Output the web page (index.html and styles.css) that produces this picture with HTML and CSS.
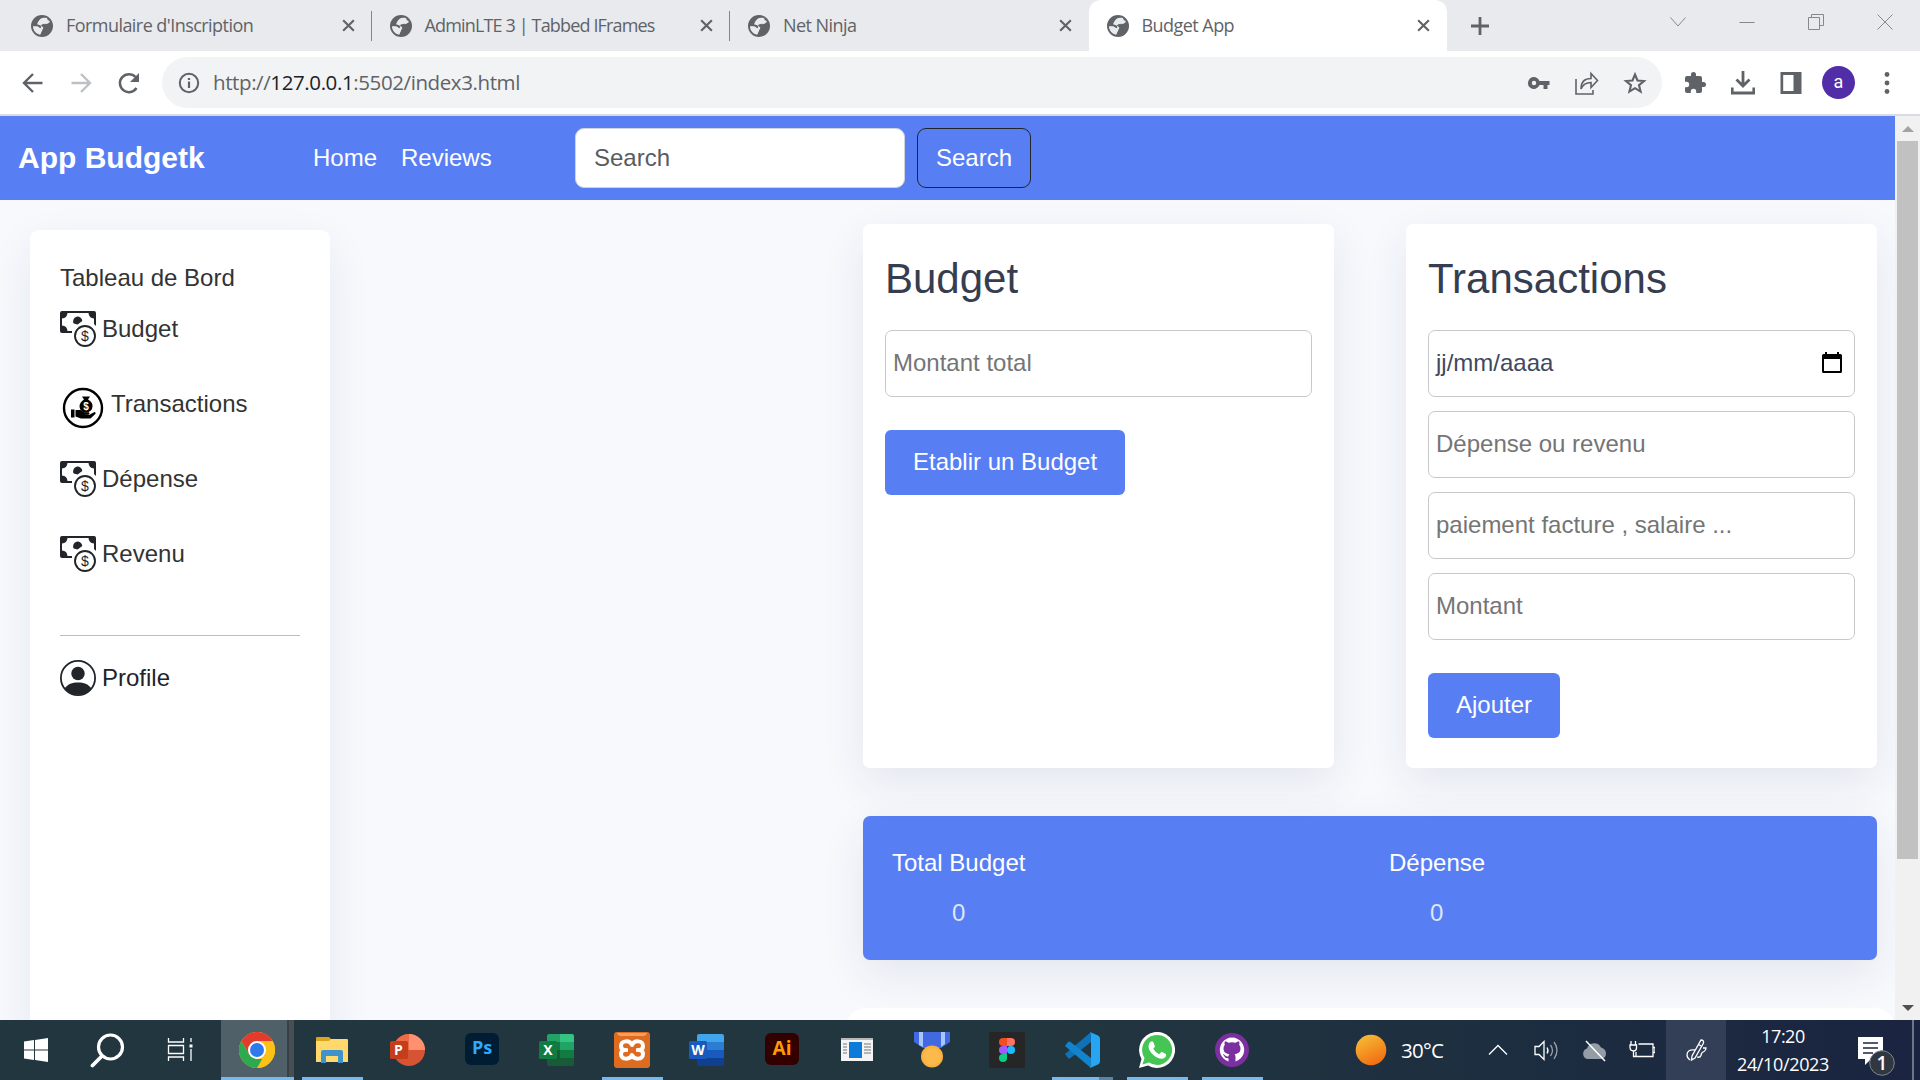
FILE: index.html
```html
<!DOCTYPE html>
<html lang="fr">
<head>
<meta charset="utf-8">
<title>Budget App</title>
<link rel="stylesheet" href="styles.css">
</head>
<body>
<svg class="defs" aria-hidden="true">
  <symbol id="globe" viewBox="2 2 20 20"><circle cx="12" cy="12" r="10" fill="#5f6368"/><path d="M16.500 4.800C12 3.500 9.500 6 8.500 8.200L7.500 10.500l4 1.200 1.800 1.800-1 2.200-2.300 4c-3.800-.8-6.200-4-6.100-7.500l3.600.3 3 1.500 1-1.200-1-1.300 2-1.200 3.500-.5 1.800-2z" fill="#e8eaed"/><path d="M4.200 12.400h4l3.800 3.200-1.400 4.200C6.800 19 4.200 16 4.200 12.400zM14 10.500l2.200-1.500 2-2.500 1 1.800-2.200 1.700z" fill="#e8eaed"/></symbol>
  <symbol id="x" viewBox="0 0 14 14"><path d="M2 2l10 10M12 2L2 12" stroke="#5f6368" stroke-width="2" fill="none"/></symbol>
  <symbol id="cash" viewBox="0 0 36 36">
    <path fill="#212529" fill-rule="evenodd" d="M2 0h32q2 0 2 2v13l-2-2V7.500A6 6 0 0 1 28.500 2h-21A6 6 0 0 1 2 7.500v7A6 6 0 0 1 7.500 20H12v2H2q-2 0-2-2V2q0-2 2-2z"/>
    <path fill="#212529" d="M13.700 12.500a4.600 4.600 0 1 1 8.600-2.500l-4.700 3.500z"/>
    <circle cx="25" cy="25" r="10" fill="#fff" stroke="#212529" stroke-width="1.900"/>
    <text x="25" y="30" text-anchor="middle" class="coin">$</text>
  </symbol>
</svg>

<header class="tabs">
  <div class="tab"><svg class="fav"><use href="#globe"/></svg><span>Formulaire d'Inscription</span><svg class="close"><use href="#x"/></svg></div>
  <div class="tab"><svg class="fav"><use href="#globe"/></svg><span class="tight">AdminLTE 3 | Tabbed IFrames</span><svg class="close"><use href="#x"/></svg></div>
  <div class="tab last"><svg class="fav"><use href="#globe"/></svg><span>Net Ninja</span><svg class="close"><use href="#x"/></svg></div>
  <div class="tab active"><svg class="fav"><use href="#globe"/></svg><span>Budget App</span><svg class="close"><use href="#x"/></svg></div>
  <svg class="plus" viewBox="0 0 20 20"><path d="M10 1v18M1 10h18" stroke="#5f6368" stroke-width="2.800"/></svg>
  <div class="window-buttons">
    <svg viewBox="0 0 18 18"><path d="M1.500 4.500L9 13l7.500-8.500"/></svg>
    <svg viewBox="0 0 18 18"><path d="M1.500 9.500h15"/></svg>
    <svg viewBox="0 0 18 18"><path d="M1.500 4.500h11v12h-11zM4.500 4.500v-3h12v11h-4"/></svg>
    <svg viewBox="0 0 18 18"><path d="M1.500 1.500l15 15M16.500 1.500l-15 15"/></svg>
  </div>
</header>

<div class="toolbar">
  <svg class="nav-icon" viewBox="0 0 24 24"><path d="M21.500 12H3.500M12 3l-9 9 9 9" fill="none" stroke="#5f6368" stroke-width="2.400"/></svg>
  <svg class="nav-icon" viewBox="0 0 24 24"><path d="M2.500 12h18M12 3l9 9-9 9" fill="none" stroke="#bdc1c6" stroke-width="2.400"/></svg>
  <svg class="nav-icon" viewBox="0 0 24 24"><path d="M19.500 17A9 9 0 1 1 18.500 6" fill="none" stroke="#5f6368" stroke-width="2.500"/><path d="M22 2v9h-9z" fill="#5f6368"/></svg>
  <div class="omnibox">
    <svg class="info" viewBox="0 0 24 24"><circle cx="12" cy="12" r="9.200" fill="none" stroke="#5f6368" stroke-width="2"/><path d="M12 10.500V17M12 7v2" stroke="#5f6368" stroke-width="2.200"/></svg>
    <span class="url">http://<b>127.0.0.1</b>:5502/index3.html</span>
    <svg class="omni-icon" viewBox="0 0 24 24"><path fill="#5f6368" fill-rule="evenodd" d="M12.500 10A6 6 0 1 0 12.500 14H16.500v4h4v-4H22.500v-4zM7 9.800a2.200 2.200 0 1 1 0 4.400 2.200 2.200 0 0 1 0-4.400z"/></svg>
    <svg class="omni-icon" viewBox="0 0 24 24"><path d="M1 8v15h17v-4M6 18c0-7 3-10.500 10-10.500V2.500l6.500 7-6.500 7v-5c-5 0-8 1.500-10 6.500z" fill="none" stroke="#5f6368" stroke-width="1.600"/></svg>
    <svg class="omni-icon" viewBox="0 0 24 24"><path d="M12 3.500l2.500 6 6.500.5-5 4.200 1.600 6.400L12 17.200l-5.600 3.400L8 14.200 3 10l6.500-.5z" fill="none" stroke="#5f6368" stroke-width="2.100"/></svg>
  </div>
  <div class="extensions">
    <svg viewBox="0 0 24 24"><path fill="#5f6368" d="M20.500 11H19V7a2 2 0 0 0-2-2h-4V3.500a2.500 2.500 0 0 0-5 0V5H4a2 2 0 0 0-2 2v3.800h1.500a2.700 2.700 0 0 1 0 5.400H2V20a2 2 0 0 0 2 2h3.800v-1.500a2.700 2.700 0 0 1 5.400 0V22H17a2 2 0 0 0 2-2v-4h1.500a2.500 2.500 0 0 0 0-5z"/></svg>
    <svg viewBox="0 0 24 24"><path d="M12 0v14M5.500 8.500L12 15l6.500-6.500M1.200 16.500v5.500h21.600v-5.500" fill="none" stroke="#5f6368" stroke-width="2.800"/></svg>
    <svg viewBox="0 0 24 24"><path fill="#5f6368" fill-rule="evenodd" d="M1.500 1h21v22h-21zM4.200 4v16h10.300V4z"/></svg>
    <span class="avatar">a</span>
    <svg viewBox="0 0 24 24"><g fill="#5f6368"><circle cx="12" cy="3.500" r="2.400"/><circle cx="12" cy="12" r="2.400"/><circle cx="12" cy="20.500" r="2.400"/></g></svg>
  </div>
</div>

<div class="viewport">
  <div class="page">
    <nav class="navbar">
      <a class="brand">App Budgetk</a>
      <a class="link home">Home</a>
      <a class="link">Reviews</a>
      <input class="search" type="text" placeholder="Search">
      <button class="search-button">Search</button>
    </nav>
    <div class="content">
      <aside class="sidebar">
        <p class="side-title">Tableau de Bord</p>
        <a class="side-link"><svg><use href="#cash"/></svg>Budget</a>
        <a class="side-link transfer"><svg viewBox="0 0 42 42"><circle cx="21" cy="21" r="19" fill="#fff" stroke="#000" stroke-width="2.400"/><path d="M20 9.500h8l-2 3q5 3 4.500 7a6 5.500 0 0 1-13 0q0-4 4.500-7z"/><path d="M9 22.500h3.500v8H9zM13.500 23h5l4 2.200h4.500q1.500 1.300-.5 2.200H21l6.500.3 5-2.700q1.800.5 1 1.800l-5 4.700H19l-5.500-2z"/><text x="24" y="23" text-anchor="middle" class="bag">$</text></svg>Transactions</a>
        <a class="side-link"><svg><use href="#cash"/></svg>Dépense</a>
        <a class="side-link"><svg><use href="#cash"/></svg>Revenu</a>
        <hr>
        <a class="side-link profile"><svg viewBox="0 0 36 36"><circle cx="18" cy="18" r="17.100" fill="#fff" stroke="#212529" stroke-width="1.800"/><circle cx="18" cy="13.500" r="6.700" fill="#212529"/><path d="M4.500 28.500C8 24 12 22.500 18 22.500s10 1.500 13.500 6A17.500 17.500 0 0 1 4.500 28.500z" fill="#212529"/></svg>Profile</a>
      </aside>
      <main class="main">
        <div class="cards">
          <section class="card">
            <h3>Budget</h3>
            <div class="fields"><input type="text" placeholder="Montant total"></div>
            <button class="submit">Etablir un Budget</button>
          </section>
          <section class="card">
            <h3>Transactions</h3>
            <div class="fields">
              <div class="date">jj/mm/aaaa<svg viewBox="0 0 20 21"><path fill-rule="evenodd" d="M3 0h2v2h10V0h2v2h1.500q1.500 0 1.500 1.500v16q0 1.500-1.500 1.500h-17Q0 21 0 19.500v-16Q0 2 1.500 2H3zM2 7v12h16V7z"/></svg></div>
              <input type="text" placeholder="Dépense ou revenu">
              <input type="text" placeholder="paiement facture , salaire ...">
              <input type="text" placeholder="Montant">
            </div>
            <button class="submit">Ajouter</button>
          </section>
        </div>
        <section class="totals">
          <div class="total budget-total"><p>Total Budget</p><span>0</span></div>
          <div class="total spent-total"><p>Dépense</p><span>0</span></div>
        </section>
        <section class="history"></section>
      </main>
    </div>
  </div>
  <div class="scrollbar">
    <svg class="arrow" viewBox="0 0 12 6"><path d="M0 6l6-6 6 6z" fill="#a3a3a3"/></svg>
    <div class="thumb"></div>
    <svg class="arrow down" viewBox="0 0 12 6"><path d="M0 0l6 6 6-6z" fill="#505050"/></svg>
  </div>
</div>

<footer class="taskbar">
  <div class="task start"><svg viewBox="0 0 36 36"><path fill="#fff" d="M6 9.500l10-1.400v9.400H6zM17 8l13-2v11.500H17zM6 18.500h10V28L6 26.500zM17 18.500h13V30l-13-1.900z"/></svg></div>
  <div class="task find"><svg viewBox="0 0 36 36"><circle cx="21.500" cy="15" r="12" fill="none" stroke="#fff" stroke-width="3.200"/><path d="M13 24L3.500 33.500" stroke="#fff" stroke-width="3.800" stroke-linecap="round"/></svg></div>
  <div class="task views"><svg viewBox="0 0 36 36"><path d="M5.500 6v4h15V6M5.500 29v-4h15v4M5.500 13.500h15v8h-15zM28 6v4M28 17v12" fill="none" stroke="#fff" stroke-width="1.300"/><path d="M26.500 12.500h3v3h-3z" fill="#fff"/></svg></div>
  <div class="task chrome"><svg viewBox="0 0 36 36"><circle cx="18" cy="18" r="18" fill="#fbc116"/><path d="M18 18L10.200 22.500 2.400 9A18 18 0 0 1 33.600 9H18z" fill="#e33b2e"/><path d="M2.400 9l7.800 13.500L18 27h7.800L18 36A18 18 0 0 1 2.400 9z" fill="#2da94f"/><path d="M25.800 22.500L18 36a18 18 0 0 0 15.600-27H18z" fill="#fbc116"/><circle cx="18" cy="18" r="9" fill="#fff"/><circle cx="18" cy="18" r="7" fill="#3079ed"/></svg></div>
  <div class="task running"><svg viewBox="0 0 36 36"><path d="M2 6q0-1 1-1h12l2 2v5H2z" fill="#d9a520"/><path d="M2 9h13l2-2h16q1 0 1 1v22H2z" fill="#ffd96b"/><path d="M7 31V20q0-2 2-2h18q2 0 2 2v11h-5v-7H12v7z" fill="#3f93cd"/></svg></div>
  <div class="task"><svg viewBox="0 0 36 36"><circle cx="20" cy="18" r="16" fill="#d65333"/><path d="M20 2a16 16 0 0 1 16 16H20z" fill="#ff9070"/><path d="M20 2v16H4A16 16 0 0 1 20 2z" fill="#ed6c47"/><rect y="9" x="1" width="18" height="18" rx="1.500" fill="#c43e1c"/><text x="9.500" y="23" text-anchor="middle" class="glyph">P</text></svg></div>
  <div class="task"><svg viewBox="0 0 36 36"><rect x="1" y="1" width="34" height="32" rx="6" fill="#001d34"/><text x="18" y="22" text-anchor="middle" class="glyph ps">Ps</text></svg></div>
  <div class="task"><svg viewBox="0 0 36 36"><path d="M8 4q0-2 2-2h12v8H8z" fill="#21a366"/><path d="M21 2h12q2 0 2 2v6H21z" fill="#33c481"/><path d="M8 10h13v8H8z" fill="#107c41"/><path d="M21 10h14v8H21z" fill="#21a366"/><path d="M21 18h14v8H21z" fill="#107c41"/><path d="M8 18h13v8h14v6q0 2-2 2H10q-2 0-2-2z" fill="#185c37"/><rect x="0" y="9" width="18" height="18" rx="1.500" fill="#107c41"/><text x="9" y="23" text-anchor="middle" class="glyph">X</text></svg></div>
  <div class="task running"><svg viewBox="0 0 36 36"><rect width="36" height="36" rx="3" fill="#de6c20"/><path d="M3 1h30q-1 3-4 3H7Q4 4 3 1z" fill="#f3a066"/><path d="M18 13c-2-5-11-5-11 1 0 3 2 4 4 4-2 0-4 1-4 4 0 6 9 6 11 1 2 5 11 5 11-1 0-3-2-4-4-4 2 0 4-1 4-4 0-6-9-6-11-1z" fill="none" stroke="#fff" stroke-width="4" stroke-linejoin="round"/><path d="M9 18h5M22 18h5" stroke="#fff" stroke-width="3.500"/></svg></div>
  <div class="task"><svg viewBox="0 0 36 36"><path d="M8 10V4q0-2 2-2h23q2 0 2 2v6z" fill="#41a5ee"/><path d="M8 10h27v8H8z" fill="#2b7cd3"/><path d="M8 18h27v8H8z" fill="#185abd"/><path d="M8 26h27v6q0 2-2 2H10q-2 0-2-2z" fill="#103f91"/><rect x="0" y="9" width="18" height="18" rx="1.500" fill="#185abd"/><text x="9" y="23" text-anchor="middle" class="glyph">W</text></svg></div>
  <div class="task"><svg viewBox="0 0 36 36"><rect x="1" y="1" width="34" height="32" rx="6" fill="#300"/><text x="18" y="23" text-anchor="middle" class="glyph ai">Ai</text></svg></div>
  <div class="task"><svg viewBox="0 0 36 36"><path d="M2 6h32v23H2z" fill="#f4f4f4"/><path d="M2 6h32v2H2z" fill="#b8b8b8"/><path d="M10 10h13v16H10z" fill="#0b7ad8"/><path d="M4 12h4M4 15h4M4 18h4M4 21h4M25 12h7M25 15h7M25 18h7M25 21h7" stroke="#777"/></svg></div>
  <div class="task"><svg viewBox="0 0 36 36"><path d="M0 0h36v10l-9 6H9l-9-6z" fill="#4169e1"/><path d="M5 0h4v15l-4-2zM27 0h4v12l-4 3z" fill="#a9c5ff"/><circle cx="18" cy="24.500" r="11" fill="#f9b142"/><circle cx="18" cy="24.500" r="8.500" fill="#fcba4a"/></svg></div>
  <div class="task"><svg viewBox="0 0 36 36"><rect width="36" height="36" rx="2" fill="#262626"/><path d="M18 6h-4a4 4 0 0 0 0 8h4z" fill="#f24e1e"/><path d="M18 6h4a4 4 0 0 1 0 8h-4z" fill="#ff7262"/><path d="M18 14h-4a4 4 0 0 0 0 8h4z" fill="#a259ff"/><circle cx="22" cy="18" r="4" fill="#1abcfe"/><path d="M18 22h-4a4 4 0 1 0 4 4z" fill="#0acf83"/></svg></div>
  <div class="task running split"><svg viewBox="0 0 36 36"><path d="M1 22l3 4q1 1 2.500 0L27 10V0L1 22z" fill="#0f72b8"/><path d="M1 14l3-4q1-1 2.500 0L27 26v10L1 14z" fill="#1284cb"/><path d="M26 0l8 3.500q2 1 2 3v23q0 2-2 3L26 36q1-1 1-3V3q0-2-1-3z" fill="#27a4f2"/></svg></div>
  <div class="task running"><svg viewBox="0 0 36 36"><path d="M0 36l2.500-9A18 18 0 1 1 9 33.500z" fill="#fff"/><path d="M3.500 32.500l2-6.500A15 15 0 1 1 10 30.500z" fill="#45c554"/><path d="M12 9.500l2 0 2 5-1.700 2.300q2 3.700 5.700 5.400l2.500-2.500 4.500 2.300q.8 3.500-3.500 4.800c-5 .8-14-6.300-14-12.300q.3-4 2.500-5z" fill="#fff"/></svg></div>
  <div class="task running"><svg viewBox="0 0 36 36"><circle cx="18" cy="18" r="17" fill="#7b2fa0"/><path d="M14.500 29.500A12.200 12.200 0 1 1 21.500 29.500V25q0-2-1-2.700c4-.5 6-2.300 6-6q0-2-1.300-3.500.6-2-.2-3.500-1.500 0-3.500 1.500-3.500-1-7 0-2-1.500-3.500-1.500-.8 1.500-.2 3.500-1.300 1.500-1.300 3.500c0 3.700 2 5.500 6 6q-1 .7-1 2-2.500 1-4-1.500l-1.500-.8q-.5.500 1 1.700 1 3 4.500 2.600z" fill="#fff"/></svg></div>

  <div class="weather"><svg viewBox="0 0 32 32"><defs><linearGradient id="sun" x1=".2" y1="0" x2=".7" y2="1"><stop stop-color="#f5bd35"/><stop offset="1" stop-color="#f26a11"/></linearGradient></defs><circle cx="16" cy="16" r="15.300" fill="url(#sun)"/></svg><span>30°C</span></div>
  <div class="tray">
    <svg viewBox="0 0 26 26"><path d="M4 17.500L13 8.500l9 9"/></svg>
    <svg viewBox="0 0 26 26"><path d="M2 9.500h4L11 4.500v18l-5-5H2z"/><path d="M14 10.500q2 3 0 6"/><path d="M17.500 8q4 5.500 0 11M21 5q6 8 0 17" opacity=".55"/></svg>
    <svg viewBox="0 0 26 26"><path d="M6 22a5.500 5.500 0 0 1 0-10.500 7.500 7.500 0 0 1 14-1q5 1.500 5 6t-5 5.500z" fill="#949ca6" stroke="none"/><path d="M5 4l19 20" stroke-width="1.500"/></svg>
    <svg viewBox="0 0 26 26"><path d="M7 15v4.500h17V7H9.500M24 10.500h2v5h-2M2 4v4M6.500 4v4M1 8h6.500v3q0 3-3 3t-3.500-3zM4.500 14v5.500H7"/></svg>
    <svg class="ink" viewBox="0 0 26 26"><path d="M18 3q3 0 2.500 3L12 21l-3.500 2 .5-4zM15 7l3 2M12 13q-8-1-8 5 0 3 3 5M14 20q3 1 4-1.500 0-3 3-4 2-1 2-3.500h-3"/></svg>
  </div>
  <div class="clock"><span>17:20</span><span class="day">24/10/2023</span></div>
  <svg class="notice" viewBox="0 0 38 44"><path d="M1 3h25v22H14l-6 6v-6H1z" fill="#fff"/><path d="M6 9h15M6 14h15M6 19h10" stroke="#1b2540" stroke-width="1.400"/><circle cx="25" cy="29" r="12.300" fill="#303740" stroke="#7d858e"/><text x="25" y="36" text-anchor="middle" class="badge">1</text></svg>
  <span class="desktop-edge"></span>
</footer>
</body>
</html>
```

FILE: styles.css
```css
* { box-sizing: border-box; }
body { margin: 0; width: 1920px; height: 1080px; overflow: hidden; display: flex; flex-direction: column; background: #fff; font-family: "Liberation Sans", Arial, sans-serif; font-size: 24px; color: #333; }
p, h3 { margin: 0; }
svg { display: block; flex: none; }
.defs { width: 0; height: 0; position: absolute; }

/* Tab strip */
.tabs { height: 51px; flex: none; display: flex; align-items: center; background: #e8eaed; padding-left: 13px; font: 18px "Open Sans", sans-serif; color: #5f6368; }
.tab { width: 358.500px; height: 51px; display: flex; align-items: center; padding: 0 16px 0 18px; position: relative; }
.tab span { margin-left: 13px; flex: 1; white-space: nowrap; letter-spacing: -.55px; padding-bottom: 1px; }
.tab .tight { letter-spacing: -.85px; }
.tab::after { content: ""; position: absolute; right: 0; top: 11px; height: 30px; width: 1px; background: #80868b; }
.tab.last::after, .tab.active::after { display: none; }
.tab.active { background: #fff; border-radius: 12px 12px 0 0; }
.fav { width: 22px; height: 22px; }
.close { width: 15px; height: 15px; }
.plus { width: 20px; height: 20px; margin-left: 23px; }
.window-buttons { display: flex; gap: 51px; margin: 0 26px 8px auto; }
.window-buttons svg { width: 18px; height: 18px; fill: none; stroke: #85888c; stroke-width: 1; }

/* Address bar */
.toolbar { height: 65px; flex: none; display: flex; align-items: center; padding: 0 20px 0 21px; background: #fff; border-bottom: 2px solid #d9dbe0; font-family: "Open Sans", sans-serif; }
.nav-icon { width: 24px; height: 24px; margin-right: 24px; }
.omnibox { width: 1500px; height: 51px; margin-left: -3px; border-radius: 26px; background: #f1f3f4; display: flex; align-items: center; padding: 0 15px; }
.info { width: 24px; height: 24px; }
.url { margin: 0 auto 2px 12px; font-size: 20.500px; letter-spacing: -.4px; color: #5f6368; }
.url b { font-weight: 400; color: #202124; }
.omni-icon { width: 24px; height: 24px; margin-left: 24px; }
.extensions { display: flex; align-items: center; margin-left: 21px; }
.extensions svg { width: 24px; height: 24px; margin-right: 24px; }
.avatar { width: 33px; height: 33px; margin: 0 20px 0 -5px; border-radius: 50%; background: #512da8; color: #fff; font: 18px/31px Roboto, sans-serif; text-align: center; }
.extensions svg:last-child { margin-right: 0; }

/* Web page */
.viewport { height: 904px; flex: none; display: flex; }
.page { width: 1895px; overflow: hidden; background: #f7f9fd; }
.navbar { height: 84px; background: #587ef4; display: flex; align-items: center; padding-left: 18px; color: #fff; }
.brand { width: 295px; font-size: 30px; font-weight: 700; }
.link { width: 90px; }
.home { width: 88px; }
.search { width: 330px; height: 60px; margin-left: 84px; padding: 0 18px; border: 1px solid #ced4da; border-radius: 9px; font: inherit; }
.search::placeholder { color: #595c5f; opacity: 1; }
.search-button { width: 114px; height: 60px; margin-left: 12px; padding: 0; border: 1px solid #212529; border-radius: 9px; background: none; font: inherit; color: #fff; }
.content { display: flex; justify-content: space-between; align-items: flex-start; }
.sidebar { width: 300px; height: 1000px; margin: 30px 0 0 30px; padding: 30px; border-radius: 9px; background: #fff; box-shadow: 0 15px 45px rgba(30, 40, 90, .08); }
.side-title { height: 37px; line-height: 36px; }
.side-link { height: 75px; display: flex; align-items: flex-start; gap: 6px; line-height: 64px; }
.side-link svg { width: 36px; height: 36px; margin-top: 14px; }
.side-link.transfer { gap: 7px; }
.side-link.transfer svg { width: 42px; height: 42px; margin: 15px 0 0 2px; }
.coin { font: 14px "Liberation Sans", sans-serif; fill: #212529; }
.bag { font: bold 10px "Liberation Sans", sans-serif; fill: #fff; }
.sidebar hr { height: 1px; margin: 38px 0 10px; border: 0; background: #bcbdbe; }
.profile { color: #212529; }
.main { width: 1049px; padding-top: 24px; }
.cards { display: flex; justify-content: space-between; padding: 0 18px 0 17px; }
.card { width: 471px; height: 544px; padding: 22px; border-radius: 7px; background: #fff; box-shadow: 0 15px 45px rgba(30, 40, 90, .09); }
h3 { height: 84px; font-size: 42px; line-height: 66px; font-weight: 400; color: #373d50; }
.fields { display: grid; gap: 14.500px; }
.fields input, .date { width: 100%; height: 66.500px; padding: 0 7px; border: 1px solid #c8c9cb; border-radius: 7px; background: #fff; font: inherit; color: #414861; }
.fields input::placeholder { color: #757575; opacity: 1; }
.date { display: flex; align-items: center; justify-content: space-between; }
.date svg { width: 20px; height: 21px; margin: 0 5px 2px 0; }
.submit { height: 65px; margin-top: 33.500px; padding: 0 28px 1px; border: 0; border-radius: 6px; background: #587ef4; color: #fff; font: inherit; }
.totals { height: 144px; margin: 48px 18px 0 17px; padding: 29px; border-radius: 7px; background: #587ef4; color: #fff; display: flex; box-shadow: 0 15px 45px rgba(30, 40, 90, .09); }
.total { line-height: 36px; }
.total p { margin-bottom: 14px; }
.total span { color: #dfe5fb; }
.budget-total { width: 497px; }
.budget-total span { margin-left: 60px; }
.spent-total span { margin-left: 41px; }
.history { height: 200px; margin-top: 48px; border-radius: 20px; background: #fff; }
.scrollbar { width: 25px; padding-top: 10px; background: #f1f1f1; display: flex; flex-direction: column; align-items: center; }
.arrow { width: 12px; height: 6px; }
.thumb { width: 21px; height: 718px; margin-top: 9px; background: #c1c1c1; }
.down { margin: auto 0 9px; }

/* Taskbar */
.taskbar { height: 60px; flex: none; display: flex; background: linear-gradient(90deg, #22363f, #22363f 55%, #1d2e40 78%, #1a2441); color: #fff; font-family: "Open Sans", sans-serif; }
.task { width: 75px; flex: none; display: flex; justify-content: center; padding: 12px 2px 0 0; position: relative; }
.task svg { width: 36px; height: 36px; }
.start { width: 72px; padding-right: 0; }
.find { width: 71px; }
.views { width: 77px; }
.chrome { background: linear-gradient(90deg, transparent 1px, #506068 1px 67px, #354249 67px 69px, #484e52 69px 74px, transparent 74px); }
.chrome::after, .running::after { content: ""; position: absolute; left: 7px; bottom: 0; width: 61px; height: 3px; background: #76b9ed; }
.chrome::after { left: 1px; width: 73px; }
.split::after { background: linear-gradient(90deg, #76b9ed 47px, #5d83a3 47px); }
.glyph { font: bold 14px "Open Sans", sans-serif; fill: #fff; }
.glyph.ps { font-size: 18px; fill: #31a8ff; }
.glyph.ai { font-size: 19px; fill: #ff9a00; }
.weather { width: 130px; margin-left: 85px; display: flex; align-items: center; gap: 14px; font-size: 20.500px; letter-spacing: -.7px; }
.weather svg { width: 32px; height: 32px; }
.tray { display: flex; }
.tray svg { width: 26px; height: 60px; margin-right: 22px; fill: none; stroke: #fff; stroke-width: 1.300; }
.tray svg.ink { width: 60px; padding: 0 17px; margin: 0 0 0 -11px; background: #333f57; }
.clock { width: 114px; display: flex; flex-direction: column; align-items: center; justify-content: center; font-size: 18px; line-height: 28px; letter-spacing: -.5px; }
.day { letter-spacing: -.35px; }
.clock span { white-space: nowrap; }
.notice { width: 38px; height: 44px; margin: 14px 0 0 17px; }
.badge { font: 600 19px "Open Sans", sans-serif; fill: #fff; }
.desktop-edge { width: 2px; margin: 0 6px 0 auto; background: #6b7688; }
```
